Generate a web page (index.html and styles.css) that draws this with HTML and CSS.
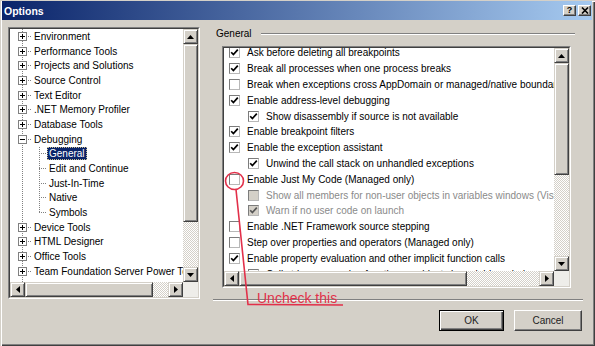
FILE: index.html
```html
<!DOCTYPE html>
<html>
<head>
<meta charset="utf-8">
<title>Options</title>
<link rel="stylesheet" href="styles.css">
</head>
<body>
<div class="window">
  <div class="titlebar">
    <span class="title">Options</span>
    <div class="caps">
      <span class="cap help">?</span>
      <span class="cap close"><svg width="8" height="7" viewBox="0 0 8 7"><path d="M1 0.5L7 6.5M7 0.5L1 6.5" stroke="#000" stroke-width="1.6" fill="none"/></svg></span>
    </div>
  </div>
  <div class="content">
    <div class="main">
      <div class="sunken tree">
        <div class="inner">
          <div class="view">
            <div class="tree-list">
              <div class="trow"><span class="pm"><svg width="7" height="7" viewBox="0 0 7 7"><path d="M1 3.5H6M3.5 1V6" stroke="#000" stroke-width="1"/></svg></span><span class="hd"></span><span class="lbl">Environment</span></div>
              <div class="trow"><span class="pm"><svg width="7" height="7" viewBox="0 0 7 7"><path d="M1 3.5H6M3.5 1V6" stroke="#000" stroke-width="1"/></svg></span><span class="hd"></span><span class="lbl">Performance Tools</span></div>
              <div class="trow"><span class="pm"><svg width="7" height="7" viewBox="0 0 7 7"><path d="M1 3.5H6M3.5 1V6" stroke="#000" stroke-width="1"/></svg></span><span class="hd"></span><span class="lbl">Projects and Solutions</span></div>
              <div class="trow"><span class="pm"><svg width="7" height="7" viewBox="0 0 7 7"><path d="M1 3.5H6M3.5 1V6" stroke="#000" stroke-width="1"/></svg></span><span class="hd"></span><span class="lbl">Source Control</span></div>
              <div class="trow"><span class="pm"><svg width="7" height="7" viewBox="0 0 7 7"><path d="M1 3.5H6M3.5 1V6" stroke="#000" stroke-width="1"/></svg></span><span class="hd"></span><span class="lbl">Text Editor</span></div>
              <div class="trow"><span class="pm"><svg width="7" height="7" viewBox="0 0 7 7"><path d="M1 3.5H6M3.5 1V6" stroke="#000" stroke-width="1"/></svg></span><span class="hd"></span><span class="lbl">.NET Memory Profiler</span></div>
              <div class="trow"><span class="pm"><svg width="7" height="7" viewBox="0 0 7 7"><path d="M1 3.5H6M3.5 1V6" stroke="#000" stroke-width="1"/></svg></span><span class="hd"></span><span class="lbl">Database Tools</span></div>
              <div class="trow"><span class="pm"><svg width="7" height="7" viewBox="0 0 7 7"><path d="M1 3.5H6" stroke="#000" stroke-width="1"/></svg></span><span class="hd"></span><span class="lbl">Debugging</span></div>
              <div class="children">
                <div class="trow child"><span class="hd2"></span><span class="lbl selected">General</span></div>
                <div class="trow child"><span class="hd2"></span><span class="lbl">Edit and Continue</span></div>
                <div class="trow child"><span class="hd2"></span><span class="lbl">Just-In-Time</span></div>
                <div class="trow child"><span class="hd2"></span><span class="lbl">Native</span></div>
                <div class="trow child"><span class="hd2"></span><span class="lbl">Symbols</span></div>
              </div>
              <div class="trow"><span class="pm"><svg width="7" height="7" viewBox="0 0 7 7"><path d="M1 3.5H6M3.5 1V6" stroke="#000" stroke-width="1"/></svg></span><span class="hd"></span><span class="lbl">Device Tools</span></div>
              <div class="trow"><span class="pm"><svg width="7" height="7" viewBox="0 0 7 7"><path d="M1 3.5H6M3.5 1V6" stroke="#000" stroke-width="1"/></svg></span><span class="hd"></span><span class="lbl">HTML Designer</span></div>
              <div class="trow"><span class="pm"><svg width="7" height="7" viewBox="0 0 7 7"><path d="M1 3.5H6M3.5 1V6" stroke="#000" stroke-width="1"/></svg></span><span class="hd"></span><span class="lbl">Office Tools</span></div>
              <div class="trow"><span class="pm"><svg width="7" height="7" viewBox="0 0 7 7"><path d="M1 3.5H6M3.5 1V6" stroke="#000" stroke-width="1"/></svg></span><span class="hd"></span><span class="lbl">Team Foundation Server Power Tools</span></div>
              <div class="trow"><span class="pm"><svg width="7" height="7" viewBox="0 0 7 7"><path d="M1 3.5H6M3.5 1V6" stroke="#000" stroke-width="1"/></svg></span><span class="hd"></span><span class="lbl">Windows Forms Designer</span></div>
            </div>
          </div>
          <div class="vscroll">
            <span class="sbtn"><svg width="7" height="4" viewBox="0 0 7 4"><path d="M3.5 0L7 4H0Z" fill="#000"/></svg></span>
            <span class="thumb tv1"></span>
            <span class="track"></span>
            <span class="sbtn"><svg width="7" height="4" viewBox="0 0 7 4"><path d="M0 0H7L3.5 4Z" fill="#000"/></svg></span>
          </div>
          <div class="hscroll">
            <span class="sbtn"><svg width="4" height="7" viewBox="0 0 4 7"><path d="M0 3.5L4 0V7Z" fill="#000"/></svg></span>
            <span class="thumb th1"></span>
            <span class="track"></span>
            <span class="sbtn"><svg width="4" height="7" viewBox="0 0 4 7"><path d="M0 0L4 3.5L0 7Z" fill="#000"/></svg></span>
          </div>
          <div class="corner"></div>
        </div>
      </div>

      <div class="right">
        <div class="ghead"><span class="glabel">General</span><div class="gline"></div></div>
        <div class="sunken list">
          <div class="inner">
            <div class="view">
              <div class="opts">
                <div class="orow"><span class="cb on"><svg width="9" height="9" viewBox="0 0 9 9"><path d="M1.2 4.2L3.4 6.6L7.8 1.6" stroke="#000" stroke-width="1.7" fill="none"/></svg></span>Ask before deleting all breakpoints</div>
                <div class="orow"><span class="cb on"><svg width="9" height="9" viewBox="0 0 9 9"><path d="M1.2 4.2L3.4 6.6L7.8 1.6" stroke="#000" stroke-width="1.7" fill="none"/></svg></span>Break all processes when one process breaks</div>
                <div class="orow"><span class="cb"></span>Break when exceptions cross AppDomain or managed/native boundaries</div>
                <div class="orow"><span class="cb on"><svg width="9" height="9" viewBox="0 0 9 9"><path d="M1.2 4.2L3.4 6.6L7.8 1.6" stroke="#000" stroke-width="1.7" fill="none"/></svg></span>Enable address-level debugging</div>
                <div class="orow ind"><span class="cb on"><svg width="9" height="9" viewBox="0 0 9 9"><path d="M1.2 4.2L3.4 6.6L7.8 1.6" stroke="#000" stroke-width="1.7" fill="none"/></svg></span>Show disassembly if source is not available</div>
                <div class="orow"><span class="cb on"><svg width="9" height="9" viewBox="0 0 9 9"><path d="M1.2 4.2L3.4 6.6L7.8 1.6" stroke="#000" stroke-width="1.7" fill="none"/></svg></span>Enable breakpoint filters</div>
                <div class="orow"><span class="cb on"><svg width="9" height="9" viewBox="0 0 9 9"><path d="M1.2 4.2L3.4 6.6L7.8 1.6" stroke="#000" stroke-width="1.7" fill="none"/></svg></span>Enable the exception assistant</div>
                <div class="orow ind"><span class="cb on"><svg width="9" height="9" viewBox="0 0 9 9"><path d="M1.2 4.2L3.4 6.6L7.8 1.6" stroke="#000" stroke-width="1.7" fill="none"/></svg></span>Unwind the call stack on unhandled exceptions</div>
                <div class="orow"><span class="cb"></span>Enable Just My Code (Managed only)</div>
                <div class="orow ind disabled"><span class="cb"></span>Show all members for non-user objects in variables windows (Visual Basic only)</div>
                <div class="orow ind disabled"><span class="cb on"><svg width="9" height="9" viewBox="0 0 9 9"><path d="M1.2 4.2L3.4 6.6L7.8 1.6" stroke="#555" stroke-width="1.7" fill="none"/></svg></span>Warn if no user code on launch</div>
                <div class="orow"><span class="cb"></span>Enable .NET Framework source stepping</div>
                <div class="orow"><span class="cb"></span>Step over properties and operators (Managed only)</div>
                <div class="orow"><span class="cb on"><svg width="9" height="9" viewBox="0 0 9 9"><path d="M1.2 4.2L3.4 6.6L7.8 1.6" stroke="#000" stroke-width="1.7" fill="none"/></svg></span>Enable property evaluation and other implicit function calls</div>
                <div class="orow ind"><span class="cb"></span>Call string-conversion function on objects in variables windows</div>
              </div>
            </div>
            <div class="vscroll">
              <span class="sbtn"><svg width="7" height="4" viewBox="0 0 7 4"><path d="M3.5 0L7 4H0Z" fill="#000"/></svg></span>
              <span class="thumb tv2"></span>
              <span class="track"></span>
              <span class="sbtn"><svg width="7" height="4" viewBox="0 0 7 4"><path d="M0 0H7L3.5 4Z" fill="#000"/></svg></span>
            </div>
            <div class="hscroll">
              <span class="sbtn"><svg width="4" height="7" viewBox="0 0 4 7"><path d="M0 3.5L4 0V7Z" fill="#000"/></svg></span>
              <span class="thumb th2"></span>
              <span class="track"></span>
              <span class="sbtn"><svg width="4" height="7" viewBox="0 0 4 7"><path d="M0 0L4 3.5L0 7Z" fill="#000"/></svg></span>
            </div>
            <div class="corner"></div>
          </div>
        </div>
        <div class="sep"></div>
        <div class="buttons">
          <div class="btn default ok">OK</div>
          <div class="btn cancel">Cancel</div>
        </div>
      </div>
    </div>
  </div>

  <svg class="annot" width="595" height="346" viewBox="0 0 595 346">
    <ellipse cx="234.5" cy="181" rx="9" ry="8.5" fill="none" stroke="#e2304a" stroke-width="1.6"/>
    <path d="M236 189.5L248 304.5L343 305" fill="none" stroke="#e2304a" stroke-width="1.6"/>
  </svg>
  <span class="annot-text">Uncheck this</span>
</div>
</body>
</html>
```

FILE: styles.css
```css
* { box-sizing: border-box; }
html, body { margin: 0; padding: 0; }
body {
  width: 595px;
  height: 346px;
  overflow: hidden;
  background: #d4d0c8;
  font-family: "Liberation Sans", Arial, sans-serif;
  font-size: 10px;
  color: #000;
}
.window {
  position: relative;
  width: 595px;
  height: 346px;
  padding: 1px 3px 3px 2px;
  background: #d4d0c8;
  box-shadow: inset 1px 1px #d4d0c8, inset 2px 2px #ffffff, inset -1px -1px #404040, inset -2px -2px #808080;
}
.titlebar {
  height: 19px;
  display: flex;
  align-items: center;
  padding-left: 2px;
  padding-right: 1px;
  background: linear-gradient(to right, #0a246a, #a6caf0);
}
.title {
  color: #fff;
  font-weight: bold;
  font-size: 10.5px;
}
.caps {
  margin-left: auto;
  display: flex;
  gap: 2px;
}
.cap {
  width: 13px;
  height: 11px;
  display: flex;
  align-items: center;
  justify-content: center;
  background: #d4d0c8;
  border: 1px solid;
  border-color: #ffffff #404040 #404040 #ffffff;
  box-shadow: inset -1px -1px #808080;
  font-weight: bold;
  font-size: 9px;
  line-height: 9px;
}
.content { padding: 7px 0 0 6px; }
.main {
  display: flex;
  align-items: flex-start;
  gap: 13px;
}
.sunken {
  border: 1px solid;
  border-color: #808080 #ffffff #ffffff #808080;
}
.sunken > .inner {
  height: 100%;
  border: 1px solid;
  border-color: #404040 #d4d0c8 #d4d0c8 #404040;
  background: #fff;
  display: grid;
  grid-template-columns: 1fr 15px;
  grid-template-rows: 1fr 15px;
}
.view {
  overflow: hidden;
  min-width: 0;
  min-height: 0;
}
.tree { width: 192px; height: 272px; }
.list { width: 349px; height: 242px; margin-top: 6px; margin-left: 9px; }

/* scrollbars */
.vscroll { display: flex; flex-direction: column; }
.hscroll { display: flex; flex-direction: row; }
.sbtn, .thumb {
  flex: none;
  display: flex;
  align-items: center;
  justify-content: center;
  background: #d4d0c8;
  border: 1px solid;
  border-color: #d4d0c8 #404040 #404040 #d4d0c8;
  box-shadow: inset 1px 1px #ffffff, inset -1px -1px #808080;
}
.vscroll .sbtn { height: 15px; }
.hscroll .sbtn { width: 15px; }
.track {
  flex: 1;
  background: repeating-conic-gradient(#d4d0c8 0 25%, #ffffff 0 50%) 0 0 / 2px 2px;
}
.tv1 { height: 178px; }
.th1 { width: 128px; }
.tv2 { height: 112px; }
.th2 { width: 228px; }
.corner { background: #eeede9; }

/* tree */
.tree-list {
  background: repeating-linear-gradient(to bottom, #808080 0 1px, transparent 1px 2px) 12px 0 / 1px 100% no-repeat;
}
.trow {
  height: 14.7px;
  display: flex;
  align-items: center;
  white-space: nowrap;
}
.pm {
  flex: none;
  width: 9px;
  height: 9px;
  margin-left: 8px;
  border: 1px solid #808080;
  background: #fff;
  display: flex;
}
.hd {
  flex: none;
  width: 4px;
  height: 1px;
  background: repeating-linear-gradient(to right, #808080 0 1px, transparent 1px 2px);
  margin-left: 1px;
}
.lbl {
  padding: 0 1px;
  line-height: 11px;
  border: 1px solid transparent;
}
.children {
  background: repeating-linear-gradient(to bottom, #808080 0 1px, transparent 1px 2px) 29px 0 / 1px 66px no-repeat;
}
.hd2 {
  flex: none;
  width: 8px;
  height: 1px;
  margin-left: 29px;
  background: repeating-linear-gradient(to right, #808080 0 1px, transparent 1px 2px);
}
.child .lbl { margin-left: 0; }
.selected {
  background: #0a246a;
  color: #fff;
  border: 1px dotted #c9bd8e;
}

/* group */
.right { width: 370px; display: flex; flex-direction: column; }
.ghead {
  height: 13px;
  display: flex;
  align-items: center;
  margin-left: 3px;
}
.gline {
  flex: 1;
  height: 2px;
  border-top: 1px solid #808080;
  border-bottom: 1px solid #ffffff;
  margin-left: 9px;
  margin-right: 8px;
}

/* options */
.opts { margin-top: -3px; padding-left: 5px; }
.orow {
  height: 15.8px;
  display: flex;
  align-items: center;
  white-space: nowrap;
}
.orow.ind { padding-left: 19px; }
.cb {
  flex: none;
  width: 11px;
  height: 11px;
  margin-right: 7px;
  border: 1px solid;
  border-color: #7c7c7c #b8b8b8 #b8b8b8 #7c7c7c;
  background: #fff;
  display: flex;
  align-items: center;
  justify-content: center;
}
.disabled { color: #8a8a8a; }
.disabled .cb { background: #d4d0c8; }

.sep {
  margin-top: 11px;
  height: 2px;
  border-top: 1px solid #808080;
  border-bottom: 1px solid #ffffff;
}
.buttons {
  margin-top: 9px;
  margin-right: 1px;
  display: flex;
  justify-content: flex-end;
  gap: 10px;
}
.btn {
  height: 21px;
  display: flex;
  align-items: center;
  justify-content: center;
  background: #d4d0c8;
  border: 1px solid;
  border-color: #ffffff #404040 #404040 #ffffff;
  box-shadow: inset -1px -1px #808080;
  color: #222;
}
.btn.default {
  border-color: #000;
  box-shadow: inset 1px 1px #ffffff, inset -1px -1px #404040, inset -2px -2px #808080;
}
.ok { width: 65px; }
.cancel { width: 68px; }

/* annotation overlay */
.annot {
  position: absolute;
  left: 0;
  top: 0;
  pointer-events: none;
}
.annot-text {
  position: absolute;
  left: 257px;
  top: 291px;
  font-size: 14px;
  line-height: 14px;
  color: #e2304a;
  white-space: nowrap;
}
```
